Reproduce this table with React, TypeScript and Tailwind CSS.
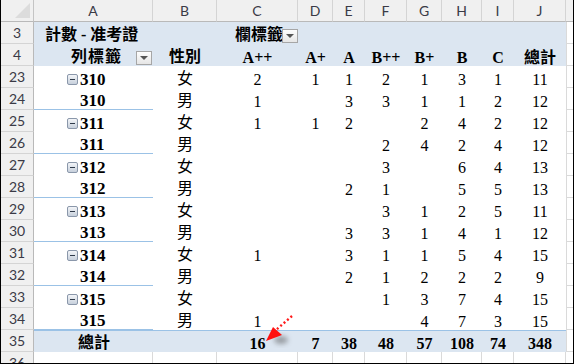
import React from 'react';

type Val = number | null;

const letters = ['A', 'B', 'C', 'D', 'E', 'F', 'G', 'H', 'I', 'J'];
const grades = ['A++', 'A+', 'A', 'B++', 'B+', 'B', 'C', '總計'];

const rows: { n: number; code: string; first: boolean; sex: string; v: Val[] }[] = [
  { n: 23, code: '310', first: true, sex: '女', v: [2, 1, 1, 2, 1, 3, 1, 11] },
  { n: 24, code: '310', first: false, sex: '男', v: [1, null, 3, 3, 1, 1, 2, 12] },
  { n: 25, code: '311', first: true, sex: '女', v: [1, 1, 2, null, 2, 4, 2, 12] },
  { n: 26, code: '311', first: false, sex: '男', v: [null, null, null, 2, 4, 2, 4, 12] },
  { n: 27, code: '312', first: true, sex: '女', v: [null, null, null, 3, null, 6, 4, 13] },
  { n: 28, code: '312', first: false, sex: '男', v: [null, null, 2, 1, null, 5, 5, 13] },
  { n: 29, code: '313', first: true, sex: '女', v: [null, null, null, 3, 1, 2, 5, 11] },
  { n: 30, code: '313', first: false, sex: '男', v: [null, null, 3, 3, 1, 4, 1, 12] },
  { n: 31, code: '314', first: true, sex: '女', v: [1, null, 3, 1, 1, 5, 4, 15] },
  { n: 32, code: '314', first: false, sex: '男', v: [null, null, 2, 1, 2, 2, 2, 9] },
  { n: 33, code: '315', first: true, sex: '女', v: [null, null, null, 1, 3, 7, 4, 15] },
  { n: 34, code: '315', first: false, sex: '男', v: [1, null, null, null, 4, 7, 3, 15] },
];

const totals = [16, 7, 38, 48, 57, 108, 74, 348];

const serif = "font-['Liberation_Serif','Noto_Sans_CJK_TC',serif]";

function RowHead({ n }: { n: number | string }) {
  return (
    <div className="h-[22px] flex items-center justify-center bg-[#f0f0f0] border-r border-b border-r-[#b9b9b9] border-b-[#d4d4d4] font-['Lato',sans-serif] text-[14px] text-[#3a3a46]">
      {n}
    </div>
  );
}

function Gap() {
  return <div className="h-[22px] border-b border-l border-[#dadada]" />;
}

function Dropdown() {
  return (
    <span className="w-[16px] h-[14px] mb-[1px] flex items-center justify-center border border-[#a6a6a6] bg-gradient-to-b from-[#fdfdfd] to-[#e6e6e6] shrink-0">
      <span className="w-0 h-0 border-l-[4px] border-r-[4px] border-t-[4px] border-l-transparent border-r-transparent border-t-[#555]" />
    </span>
  );
}

function Minus() {
  return (
    <span className="w-[11px] h-[11px] mb-[3px] mr-[2px] rounded-[2px] border border-[#8a97aa] bg-gradient-to-b from-[#f3f5f8] to-[#c7d0dc] flex items-center justify-center shrink-0">
      <span className="w-[5px] h-[1px] bg-[#2f3a4a]" />
    </span>
  );
}

function Num({ v, bold }: { v: Val | string; bold?: boolean }) {
  return (
    <div className={`h-[22px] flex items-end justify-center ${serif} text-[16px] leading-[16px] ${bold ? 'font-bold' : ''}`}>
      {v}
    </div>
  );
}

export default function App() {
  return (
    <div className="relative w-[574px] h-[364px] overflow-hidden bg-white border-l border-r border-b border-black text-black">
      <div className="grid grid-cols-[33px_119px_64px_81px_35px_32px_42px_35px_40px_32px_52px_1fr]">
        {/* column headers */}
        <div className="h-[22px] relative bg-[#f0f0f0] border-r border-b border-r-[#c4c4c4] border-b-[#b9b9b9]">
          <span className="absolute right-[3px] bottom-[3px] w-0 h-0 [border-left:15px_solid_transparent] [border-bottom:15px_solid_#dcdcdc]" />
        </div>
        {letters.map((l) => (
          <div
            key={l}
            className="h-[22px] flex items-center justify-center bg-[#f0f0f0] border-r border-b border-r-[#d4d4d4] border-b-[#b9b9b9] font-['Lato',sans-serif] text-[14px] text-[#3a3a46]"
          >
            {l}
          </div>
        ))}
        <div className="h-[22px] bg-[#f0f0f0] border-b border-b-[#b9b9b9]" />

        {/* row 3 */}
        <RowHead n={3} />
        <div className={`h-[22px] col-span-2 flex items-end pl-[11px] bg-[#dce6f1] ${serif} font-bold text-[16px] leading-[18px] whitespace-nowrap`}>
          計數 - 准考證
        </div>
        <div className={`h-[22px] flex items-end justify-end bg-[#dce6f1] ${serif} font-bold text-[16px] leading-[18px] whitespace-nowrap`}>
          <span className="-mr-[1px]">欄標籤</span>
          <Dropdown />
        </div>
        <div className="h-[22px] col-span-7 bg-[#dce6f1]" />
        <Gap />

        {/* row 4 */}
        <RowHead n={4} />
        <div className={`h-[22px] flex items-end pl-[37px] pr-[1px] bg-[#dce6f1] ${serif} font-bold text-[16px] leading-[18px]`}>
          <span className="tracking-[1px]">列標籤</span>
          <span className="ml-auto">
            <Dropdown />
          </span>
        </div>
        <div className={`h-[22px] flex items-end justify-center bg-[#dce6f1] ${serif} font-bold text-[16px] leading-[18px]`}>
          性別
        </div>
        {grades.map((g) => (
          <div
            key={g}
            className={`h-[22px] flex items-end justify-center bg-[#dce6f1] ${serif} font-bold text-[16px] leading-[16px]`}
          >
            {g}
          </div>
        ))}
        <Gap />

        {/* data rows */}
        {rows.map((r) => (
          <React.Fragment key={r.n}>
            <RowHead n={r.n} />
            <div
              className={`h-[22px] flex items-end ${serif} font-bold text-[17px] leading-[16px] ${
                r.first ? 'pl-[33px]' : 'pl-[46px] border-b border-[#9bc2e6]'
              }`}
            >
              {r.first && <Minus />}
              {r.code}
            </div>
            <div className={`h-[22px] flex items-end justify-center ${serif} text-[16px] leading-[18px]`}>{r.sex}</div>
            {r.v.map((v, i) => (
              <Num key={i} v={v} />
            ))}
            <Gap />
          </React.Fragment>
        ))}

        {/* row 35 totals */}
        <RowHead n={35} />
        <div className={`h-[22px] flex items-end pl-[44px] bg-[#dce6f1] border-t border-[#9bc2e6] ${serif} font-bold text-[16px] leading-[18px]`}>
          總計
        </div>
        <div className="h-[22px] bg-[#dce6f1] border-t border-[#9bc2e6]" />
        {totals.map((t, i) => (
          <div
            key={i}
            className={`h-[22px] flex items-end justify-center bg-[#dce6f1] border-t border-[#9bc2e6] ${serif} font-bold text-[16px] leading-[16px]`}
          >
            {t}
          </div>
        ))}
        <Gap />

        {/* row 36 */}
        <RowHead n={36} />
        {letters.map((l) => (
          <div key={l} className="h-[22px] border-r border-[#dadada]" />
        ))}
        <div className="h-[22px]" />
      </div>

      {/* red dotted arrow annotation */}
      <svg className="absolute left-0 top-0 pointer-events-none" width="574" height="364">
        <defs>
          <filter id="blur" x="-50%" y="-50%" width="200%" height="200%">
            <feGaussianBlur stdDeviation="2.5" />
          </filter>
        </defs>
        <ellipse cx="280" cy="340" rx="7" ry="4" fill="#555" opacity="0.5" filter="url(#blur)" />
        <line x1="291" y1="316" x2="275" y2="330" stroke="#ff1a1a" strokeWidth="2.4" strokeDasharray="2 2.5" />
        <polygon points="265,341 272,327 281,335" fill="#ff1010" />
      </svg>
    </div>
  );
}
